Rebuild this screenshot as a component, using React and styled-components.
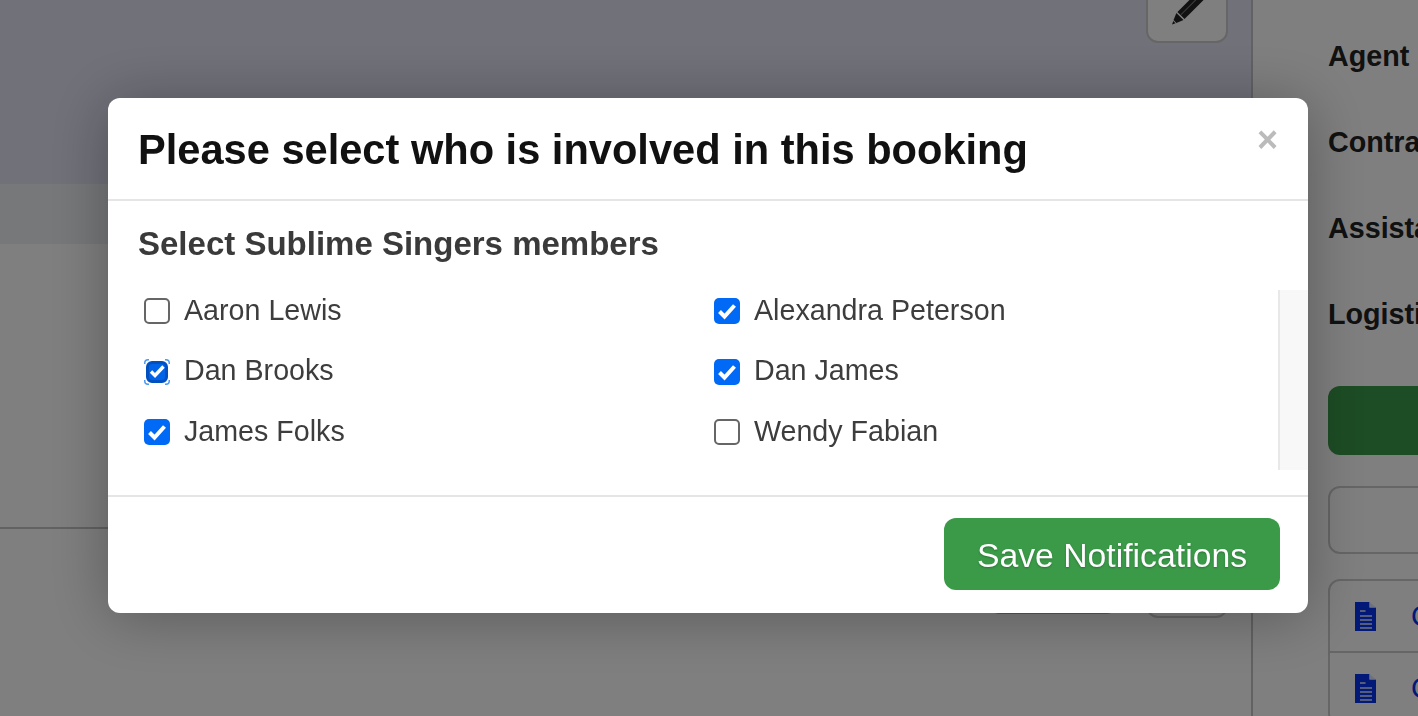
import React from 'react';
import styled, { createGlobalStyle } from 'styled-components';

const GlobalStyle = createGlobalStyle`
  html, body {
    margin: 0;
    height: 100%;
    overflow: hidden;
    background: #fff;
    font-family: "Liberation Sans", Arial, sans-serif;
  }
`;

const Page = styled.div`
  display: flex;
  width: 1418px;
  height: 716px;
  overflow: hidden;
`;

const Main = styled.main`
  width: 1253px;
  flex: none;
  box-sizing: border-box;
  border-right: 2px solid #c4c4c4;
  display: flex;
  flex-direction: column;
`;

const Banner = styled.div`
  height: 184px;
  flex: none;
  background: #e2e2f4;
  display: flex;
  justify-content: flex-end;
  padding-right: 23px;
`;

const EditButton = styled.button`
  width: 82px;
  height: 62px;
  margin-top: ${props => props.$top}px;
  box-sizing: border-box;
  background: #fff;
  border: 2px solid #ccc;
  border-radius: 12px;
  padding: 0;
  display: flex;
  align-items: center;
  justify-content: center;
`;

const SubBanner = styled.div`
  height: 60px;
  flex: none;
  background: #eef0f4;
`;

const Content = styled.div`
  height: 283px;
  flex: none;
  border-bottom: 2px solid #c4c4c4;
`;

const Actions = styled.div`
  display: flex;
  justify-content: flex-end;
  align-items: flex-start;
  gap: 28px;
  padding-right: 23px;
`;

const DangerButton = styled.div`
  width: 130px;
  height: 60px;
  margin-top: 25px;
  border-radius: 12px;
  background: #e09a9a;
`;

const Side = styled.aside`
  flex: 1;
  min-width: 0;
  padding: 38px 0 0 75px;
  overflow: hidden;
`;

const Field = styled.div`
  height: 86px;
  font-size: 28.7px;
  line-height: 36px;
  font-weight: 700;
  color: #222;
  white-space: nowrap;
`;

const BookButton = styled.div`
  width: 200px;
  height: 69px;
  margin-top: 4px;
  background: #3a9a48;
  border-radius: 12px;
`;

const OutlineButton = styled.div`
  width: 200px;
  height: 68px;
  margin-top: 31px;
  box-sizing: border-box;
  border: 2px solid #ccc;
  border-radius: 12px;
`;

const DocList = styled.div`
  width: 200px;
  margin-top: 25px;
  box-sizing: border-box;
  border: 2px solid #ccc;
  border-radius: 12px;
`;

const DocRow = styled.div`
  height: 70px;
  display: flex;
  align-items: center;
  gap: 35px;
  padding-left: 25px;
  font-size: 28.7px;
  color: #0632f0;
  white-space: nowrap;

  & + & {
    border-top: 2px solid #ccc;
  }
`;

const Overlay = styled.div`
  position: fixed;
  inset: 0;
  background: rgba(0, 0, 0, 0.5);
  padding: 98px 0 0 108px;
`;

const Modal = styled.div`
  width: 1200px;
  height: 515px;
  background: #fff;
  border-radius: 12px;
  box-shadow: 0 4px 60px rgba(0, 0, 0, 0.3);
  display: flex;
  flex-direction: column;
  overflow: hidden;
`;

const ModalHeader = styled.header`
  height: 101px;
  flex: none;
  box-sizing: border-box;
  display: flex;
  align-items: center;
  justify-content: space-between;
  padding: 2px 30px 0;
`;

const Title = styled.h2`
  margin: 0;
  font-size: 41.6px;
  font-weight: 700;
  color: #111;
`;

const Close = styled.span`
  font-size: 36px;
  font-weight: 700;
  line-height: 1;
  color: #bbb;
  margin-top: -20px;
`;

const ModalBody = styled.div`
  height: 298px;
  flex: none;
  box-sizing: border-box;
  border-top: 2px solid #e5e5e5;
  border-bottom: 2px solid #e5e5e5;
`;

const Subtitle = styled.h3`
  margin: 0;
  height: 89px;
  box-sizing: border-box;
  padding: 23px 30px 0;
  font-size: 33px;
  line-height: 40px;
  font-weight: 700;
  color: #3a3a3a;
`;

const ScrollArea = styled.div`
  height: 180px;
  display: flex;
`;

const MemberGrid = styled.div`
  flex: 1;
  display: grid;
  grid-template-columns: 570px 1fr;
  grid-auto-rows: 60.5px;
  padding-left: 36px;
`;

const Track = styled.div`
  width: 30px;
  flex: none;
  box-sizing: border-box;
  background: #f8f8f8;
  border-left: 2px solid #e8e8e8;
`;

const Member = styled.label`
  display: flex;
  align-items: center;
  gap: 14px;
  height: 40px;
  font-size: 28.65px;
  color: #3d3d3d;
`;

const Box = styled.span`
  position: relative;
  width: 26px;
  height: 26px;
  margin-top: 2px;
  flex: none;
  box-sizing: border-box;
  border-radius: 5px;
  border: ${props => (props.$checked ? '0' : '2px solid #666')};
  background: ${props => (props.$checked ? '#0069f5' : '#fff')};

  ${props => props.$focused && `
    background: #fff;
    &::before {
      content: '';
      position: absolute;
      inset: 2px;
      border-radius: 6px;
      background: #0063e8;
      border: 3px solid #0050c0;
      box-sizing: border-box;
    }
  `}

  svg {
    position: absolute;
    inset: 0;
  }
`;

const ModalFooter = styled.footer`
  flex: 1;
  display: flex;
  justify-content: flex-end;
  align-items: flex-start;
  padding: 21px 28px 0 0;
`;

const SaveButton = styled.button`
  width: 336px;
  height: 72px;
  border: 0;
  border-radius: 12px;
  background: #3a9a48;
  color: #fff;
  font-family: inherit;
  font-size: 33.75px;
  text-shadow: 0 1px 2px rgba(0, 0, 0, 0.25);
  padding: 2px 0 0;
`;

const PencilSvg = styled.svg`
  transform: translateY(-2.5px);
`;

const DocSvg = styled.svg`
  flex: none;
`;

const members = [
  { name: 'Aaron Lewis', checked: false },
  { name: 'Alexandra Peterson', checked: true },
  { name: 'Dan Brooks', checked: true, focused: true },
  { name: 'Dan James', checked: true },
  { name: 'James Folks', checked: true },
  { name: 'Wendy Fabian', checked: false },
];

const fields = ['Agent', 'Contract', 'Assistant', 'Logistics'];

const CheckMark = ({ focused }) => (
  <svg width="26" height="26" viewBox="0 0 26 26" fill="none">
    <path
      d={focused ? 'M7 12.5 L11 16.5 L19.5 7.5' : 'M5.5 13.5 L10.5 18.5 L20.5 7.5'}
      stroke="#fff"
      strokeWidth={focused ? 3.4 : 4}
    />
  </svg>
);

const FocusCorners = () => (
  <svg width="26" height="26" viewBox="0 0 26 26" fill="none" stroke="#4a9af5" strokeWidth="1.5">
    <path d="M0.75 5 V4 Q0.75 0.75 4 0.75 H5" />
    <path d="M21 0.75 H22 Q25.25 0.75 25.25 4 V5" />
    <path d="M25.25 21 V22 Q25.25 25.25 22 25.25 H21" />
    <path d="M5 25.25 H4 Q0.75 25.25 0.75 22 V21" />
  </svg>
);

const PencilIcon = () => (
  <PencilSvg width="44" height="44" viewBox="0 0 44 44">
    <g transform="rotate(45 22 22)" fill="#222">
      <path d="M17 -2 h10 v3 h-10 z" />
      <path d="M17 2.5 h10 v28 h-10 z" />
      <path d="M20.9 4 h1 v26 h-1 z" fill="#808080" />
      <path d="M17 32 h10 l-3 7 h-4 z" />
      <path d="M20.4 39.8 h3.2 l-1.6 3.4 z" />
    </g>
  </PencilSvg>
);

const DocIcon = () => (
  <DocSvg width="21" height="29" viewBox="0 0 21 29">
    <path d="M0 0 H14.5 V5.5 H21 V29 H0 Z" fill="#0632f0" />
    <path d="M14.5 0 L21 5.5 H14.5 Z" fill="#dce4ff" />
    <path d="M5 9 H10.5 M5 14 H17 M5 18 H17 M5 22 H17 M5 26 H17" stroke="#dfe6ff" strokeWidth="1.3" />
  </DocSvg>
);

const App = () => (
  <>
    <GlobalStyle />
    <Page>
      <Main>
        <Banner>
          <EditButton $top={-19}><PencilIcon /></EditButton>
        </Banner>
        <SubBanner />
        <Content />
        <Actions>
          <DangerButton />
          <EditButton $top={27} />
        </Actions>
      </Main>
      <Side>
        {fields.map(label => <Field key={label}>{label}</Field>)}
        <BookButton />
        <OutlineButton />
        <DocList>
          <DocRow><DocIcon />Contract</DocRow>
          <DocRow><DocIcon />Contract</DocRow>
        </DocList>
      </Side>
    </Page>
    <Overlay>
      <Modal>
        <ModalHeader>
          <Title>Please select who is involved in this booking</Title>
          <Close>×</Close>
        </ModalHeader>
        <ModalBody>
          <Subtitle>Select Sublime Singers members</Subtitle>
          <ScrollArea>
            <MemberGrid>
              {members.map(m => (
                <Member key={m.name}>
                  <Box $checked={m.checked} $focused={m.focused}>
                    {m.focused && <FocusCorners />}
                    {m.checked && <CheckMark focused={m.focused} />}
                  </Box>
                  {m.name}
                </Member>
              ))}
            </MemberGrid>
            <Track />
          </ScrollArea>
        </ModalBody>
        <ModalFooter>
          <SaveButton>Save Notifications</SaveButton>
        </ModalFooter>
      </Modal>
    </Overlay>
  </>
);

export default App;
